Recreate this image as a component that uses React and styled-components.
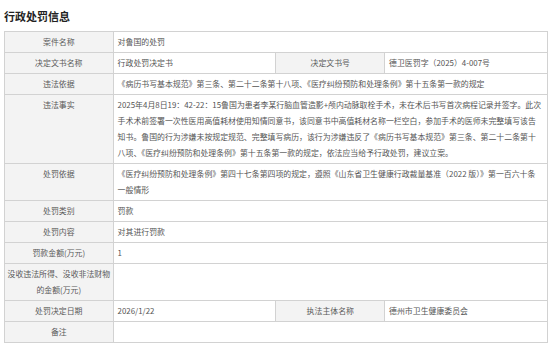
import styled, { createGlobalStyle } from "styled-components";

const GlobalStyle = createGlobalStyle`
  html, body {
    margin: 0;
    background: #fff;
  }
  body {
    font-family: "Noto Sans CJK SC", "Noto Sans", sans-serif;
  }
`;

const Page = styled.div`
  width: 554px;
  padding: 7px 6px 0 4px;
  box-sizing: border-box;
`;

const Title = styled.h2`
  margin: 0 0 6px;
  font-size: 11px;
  line-height: 18px;
  font-weight: 700;
  color: #222;
`;

const Table = styled.table`
  width: 544px;
  border-collapse: collapse;
  table-layout: fixed;
  font-size: 7.9px;
  line-height: 16px;
  color: #555;
`;

const Label = styled.th`
  padding: 2px 1px;
  border: 1px solid #d2d2d2;
  background: #f3f3f3;
  font-weight: 400;
  text-align: center;
  vertical-align: top;
  color: #5a5a5a;
`;

const Value = styled.td`
  padding: 2px 4px 2px 4px;
  border: 1px solid #d2d2d2;
  background: #fff;
  vertical-align: top;
  text-align: left;
  word-break: break-all;
`;

const Column = styled.col`
  width: ${(p) => (p.$label ? "20%" : "30%")};
`;

const rows = [
  { label: "案件名称", value: "对鲁国的处罚" },
  {
    label: "决定文书名称",
    value: "行政处罚决定书",
    label2: "决定文书号",
    value2: "德卫医罚字（2025）4-007号",
  },
  {
    label: "违法依据",
    value:
      "《病历书写基本规范》第三条、第二十二条第十八项、《医疗纠纷预防和处理条例》第十五条第一款的规定",
  },
  {
    label: "违法事实",
    value:
      "2025年4月8日19：42-22：15鲁国为患者李某行脑血管造影+颅内动脉取栓手术，未在术后书写首次病程记录并签字。此次手术术前签署一次性医用高值耗材使用知情同意书，该同意书中高值耗材名称一栏空白，参加手术的医师未完整填写该告知书。鲁国的行为涉嫌未按规定规范、完整填写病历，该行为涉嫌违反了《病历书写基本规范》第三条、第二十二条第十八项、《医疗纠纷预防和处理条例》第十五条第一款的规定，依法应当给予行政处罚，建议立案。",
  },
  {
    label: "处罚依据",
    value:
      "《医疗纠纷预防和处理条例》第四十七条第四项的规定，遵照《山东省卫生健康行政裁量基准（2022 版）》第一百六十条一般情形",
  },
  { label: "处罚类别", value: "罚款" },
  { label: "处罚内容", value: "对其进行罚款" },
  { label: "罚款金额(万元)", value: "1" },
  { label: "没收违法所得、没收非法财物的金额(万元)", value: "" },
  {
    label: "处罚决定日期",
    value: "2026/1/22",
    label2: "执法主体名称",
    value2: "德州市卫生健康委员会",
  },
  { label: "备注", value: "" },
];

export default function App() {
  return (
    <>
      <GlobalStyle />
      <Page>
        <Title>行政处罚信息</Title>
        <Table>
          <colgroup>
            <Column $label />
            <Column />
            <Column $label />
            <Column />
          </colgroup>
          <tbody>
            {rows.map((r) => (
              <tr key={r.label}>
                <Label>{r.label}</Label>
                {r.label2 ? (
                  <>
                    <Value>{r.value}</Value>
                    <Label>{r.label2}</Label>
                    <Value>{r.value2}</Value>
                  </>
                ) : (
                  <Value colSpan={3}>{r.value}</Value>
                )}
              </tr>
            ))}
          </tbody>
        </Table>
      </Page>
    </>
  );
}
